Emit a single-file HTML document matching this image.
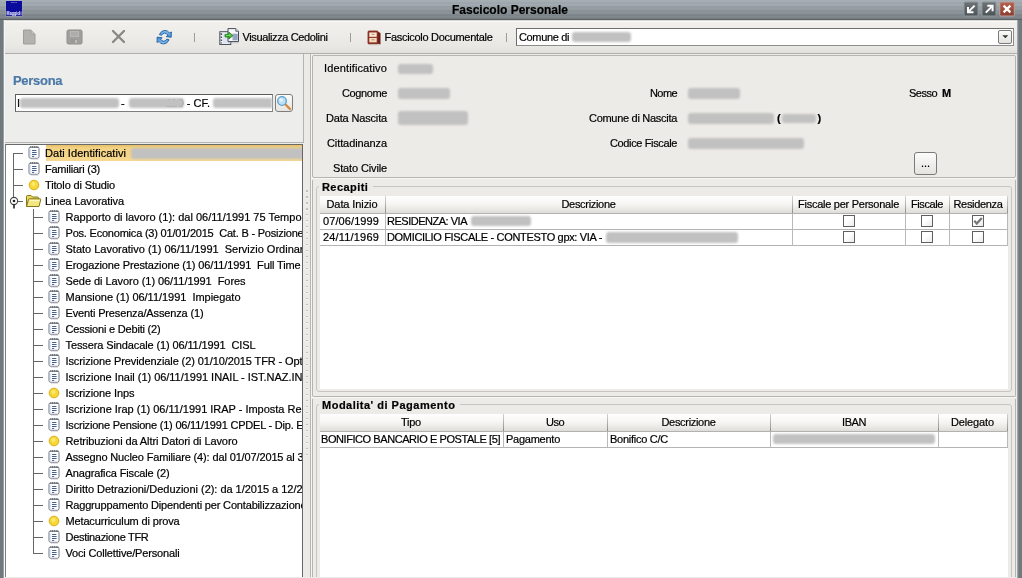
<!DOCTYPE html>
<html>
<head>
<meta charset="utf-8">
<title>Fascicolo Personale</title>
<style>
html,body{margin:0;padding:0;}
body{will-change:transform;width:1022px;height:578px;overflow:hidden;position:relative;background:#ecebe7;font-family:"Liberation Sans",sans-serif;font-size:11px;color:#000;-webkit-text-stroke-width:0.2px;}
.abs{position:absolute;}
.t{position:absolute;white-space:pre;line-height:14px;height:14px;}
.r{text-align:right;}
.b{font-weight:bold;}
.blur{position:absolute;background:#c1c1c1;border-radius:3px;filter:blur(0.8px);}
/* window frame */
#titlebar{left:0;top:0;width:1022px;height:20px;border-bottom:1px solid #5c6367;box-sizing:border-box;background:
 repeating-linear-gradient(to bottom, rgba(255,255,255,0.045) 0, rgba(255,255,255,0.045) 2px, rgba(0,0,0,0.015) 2px, rgba(0,0,0,0.015) 4px),
 linear-gradient(to bottom,#a2abb1 0,#a0a9af 20%,#8d969b 55%,#7c8489 85%,#767e83 100%);}
#title{left:-1px;top:3px;width:1022px;text-align:center;font-weight:bold;font-size:12px;line-height:15px;}
#bl{z-index:5;left:0;top:20px;width:5px;height:558px;background:linear-gradient(to right,#70797e 0,#70797e 3px,#99a0a4 3px,#99a0a4 4px,#f6f5f3 4px,#f6f5f3 5px);}
#br{left:1017px;top:20px;width:5px;height:558px;background:linear-gradient(to right,#b4b9ba 0,#8a9296 1px,#70797e 2px);}
.tb{position:absolute;top:2px;width:14px;height:14px;border-radius:2px;box-sizing:border-box;}
/* toolbar */
#toolbar{left:4px;top:20px;width:1013px;height:33px;background:linear-gradient(to bottom,#d9d8d5 0,#d9d8d5 1px,#f9f8f6 1px,#f9f8f6 2px,#f1f0ec 2px,#ecebe7 18px,#e8e7e3 27px,#e1e0dc 33px);border-bottom:1px solid #b0afab;}
.sep{position:absolute;top:33px;width:1px;height:9px;background:#9d9d99;}
/* panels */
.panel{position:absolute;box-sizing:border-box;}
/* tree */
#tree{left:5px;top:144px;width:298px;height:433px;background:#fff;border-left:1px solid #808080;border-top:1px solid #6a6a6a;border-right:1px solid #666;box-sizing:border-box;overflow:hidden;}
.tl{position:absolute;background:#666;}
.ti{position:absolute;white-space:pre;line-height:16px;height:16px;}
/* tables */
.th{position:absolute;box-sizing:border-box;padding-right:2px;height:18px;line-height:17px;text-align:center;background:linear-gradient(to bottom,#ffffff 0,#f7f6f4 45%,#e9e8e4 80%,#dedcd8 100%);border-bottom:1px solid #b3b2ae;white-space:pre;}
.th:after{content:'';position:absolute;right:0;top:0;width:1px;height:17px;background:linear-gradient(to bottom,#d5d4d0,#8f8e8a);}
.td{position:absolute;box-sizing:border-box;white-space:pre;border-right:1px solid #b9b9b9;border-bottom:1px solid #b4b4b4;padding-left:3px;line-height:19px;overflow:hidden;}
.cb{position:absolute;width:12px;height:12px;box-sizing:border-box;border:1px solid #606060;background:linear-gradient(135deg,#ffffff 40%,#ecebe8);}
</style>
</head>
<body>
<!-- title bar -->
<div id="titlebar" class="abs"></div>
<div id="title" class="abs">Fascicolo Personale</div>
<svg class="abs" style="left:5px;top:0px" width="19" height="18" viewBox="0 0 19 18">
 <rect x="0.500" y="0.300" width="17" height="16.400" fill="#aab4da" opacity="0.550"/>
 <rect x="1" y="1" width="16" height="14.800" fill="#0b0b9c"/>
 <text x="1.600" y="14.600" font-family="Liberation Sans, sans-serif" font-size="5" font-weight="bold" fill="#ffffff" textLength="14.800" lengthAdjust="spacingAndGlyphs">Maggioli</text>
 <text x="6" y="3.200" font-family="Liberation Sans, sans-serif" font-size="2.400" fill="#c5c5f0" textLength="6" lengthAdjust="spacingAndGlyphs">gruppo</text>
</svg>
<div id="bl" class="abs"></div>
<div id="br" class="abs"></div>
<!-- title buttons -->
<svg class="abs" style="left:963px;top:1px" width="54" height="17" viewBox="0 0 54 17">
 <defs>
  <linearGradient id="gb" x1="0" y1="0" x2="0" y2="1"><stop offset="0" stop-color="#6d7478"/><stop offset="1" stop-color="#4c5357"/></linearGradient>
  <linearGradient id="gr" x1="0" y1="0" x2="0" y2="1"><stop offset="0" stop-color="#b66250"/><stop offset="1" stop-color="#8c3a2f"/></linearGradient>
 </defs>
 <rect x="1" y="1" width="14" height="14" rx="1" fill="url(#gb)" stroke="#8f989c" stroke-width="1"/>
 <rect x="19" y="1" width="14" height="14" rx="1" fill="url(#gb)" stroke="#8f989c" stroke-width="1"/>
 <rect x="36.800" y="1" width="14.500" height="14" rx="1" fill="url(#gr)" stroke="#b9a39d" stroke-width="1"/>
 <path d="M11.600 4.600 L5.800 10.400" stroke="#fff" stroke-width="2" fill="none"/>
 <path d="M5 6 V11.300 H10.500" stroke="#fff" stroke-width="2" fill="none"/>
 <path d="M22.800 11.600 L28.800 5.600" stroke="#fff" stroke-width="2" fill="none"/>
 <path d="M24.300 4.800 H29.600 V10.200" stroke="#fff" stroke-width="2" fill="none"/>
 <path d="M40.600 4.600 L47.400 11.400 M47.400 4.600 L40.600 11.400" stroke="#fff" stroke-width="2.200" fill="none"/>
</svg>

<!-- toolbar -->
<div id="toolbar" class="abs"></div>
<!-- new doc icon -->
<svg class="abs" style="left:22px;top:29px" width="16" height="17" viewBox="0 0 16 17">
 <path d="M1.500 1 H9 L13 5 V15 H1.500 Z" fill="#b4b2ae" stroke="#a09e9a" stroke-width="1"/>
 <path d="M9 1 V5 H13" fill="#c6c4c0" stroke="#a09e9a" stroke-width="0.800"/>
</svg>
<!-- save icon -->
<svg class="abs" style="left:66px;top:29px" width="17" height="17" viewBox="0 0 17 17">
 <rect x="1" y="1" width="15" height="14" rx="1.500" fill="#a09f9c" stroke="#8f8e8b"/>
 <rect x="4" y="2" width="9" height="6" fill="#b9b8b5"/>
 <path d="M5 4 H12 M5 6 H12" stroke="#a2a19e" stroke-width="1"/>
 <rect x="5" y="10" width="7" height="5" fill="#9a9996"/>
 <rect x="9" y="11" width="2" height="3" fill="#bdbcb9"/>
</svg>
<!-- delete X -->
<svg class="abs" style="left:110px;top:28px" width="18" height="18" viewBox="0 0 18 18">
 <path d="M3 3 L14 14 M14 3 L3 14" stroke="#888784" stroke-width="2.300" fill="none" stroke-linecap="round"/>
</svg>
<!-- refresh -->
<svg class="abs" style="left:156px;top:29px" width="17" height="17" viewBox="0 0 17 17">
 <defs><linearGradient id="rf" x1="0" y1="0" x2="0" y2="1"><stop offset="0" stop-color="#8cc4f0"/><stop offset="1" stop-color="#3f8ad2"/></linearGradient></defs>
 <g><path d="M3.300 5.600 Q5.300 1.300 9 1.400 Q11.800 1.500 13.300 3.800 L15.400 3 L15.200 8.300 L10.200 7.600 L12 6.300 Q10.500 4.100 8.500 4.100 Q6.600 4.300 5.600 6.300 Z" fill="url(#rf)" stroke="#1f5f9e" stroke-width="0.900" stroke-linejoin="round"/></g>
 <g transform="rotate(180 8.200 8.200)"><path d="M3.300 5.600 Q5.300 1.300 9 1.400 Q11.800 1.500 13.300 3.800 L15.400 3 L15.200 8.300 L10.200 7.600 L12 6.300 Q10.500 4.100 8.500 4.100 Q6.600 4.300 5.600 6.300 Z" fill="url(#rf)" stroke="#1f5f9e" stroke-width="0.900" stroke-linejoin="round"/></g>
</svg>
<div class="sep" style="left:194px"></div>
<!-- cedolini icon -->
<svg class="abs" style="left:218px;top:27px" width="22" height="20" viewBox="0 0 22 20">
 <rect x="1.800" y="4.700" width="11" height="12.800" fill="#eef0f6" stroke="#4d525c" stroke-width="1"/>
 <path d="M3.300 6.300 V16.500" stroke="#4d525c" stroke-width="1.600" stroke-dasharray="1.600 1.500"/>
 <path d="M5 7 H12 V16.500 H5 Z" fill="#dfe4f2"/>
 <path d="M10.500 15.600 H20.800 V16.200 H10.500 Z" fill="#a9adb5" opacity="0.700"/>
 <path d="M10 1.600 H17.800 L20.500 4.300 V14.600 H10 Z" fill="#f6f8fb" stroke="#434a57" stroke-width="1"/>
 <path d="M17.800 1.600 V4.300 H20.500" fill="#dfe5ee" stroke="#434a57" stroke-width="0.800"/>
 <rect x="14.500" y="6.700" width="5.200" height="6.600" fill="#98a4c0"/>
 <path d="M7 7.400 H10.900 V5.200 L14.900 8.600 L10.900 12 V9.900 H7 Z" fill="#3cb62f" stroke="#1c7614" stroke-width="0.800" stroke-linejoin="round"/>
 <path d="M7.800 8.400 H11.500 V7.300 L13.200 8.600" fill="none" stroke="#8fe486" stroke-width="0.800"/>
</svg>
<div class="t" style="left:242.5px;top:30px"><span style="letter-spacing:-0.375px">Visualizza Cedolini</span></div>
<div class="sep" style="left:350px"></div>
<!-- book icon -->
<svg class="abs" style="left:367px;top:30px" width="15" height="16" viewBox="0 0 15 16">
 <path d="M10.500 1.500 L13.500 3 V14.500 L10.500 13.500 Z" fill="#6a1f16"/>
 <rect x="1" y="1" width="10" height="13" rx="1" fill="#93372a" stroke="#7a251a" stroke-width="0.800"/>
 <rect x="2.300" y="2.500" width="7.400" height="4.300" fill="#f7ead6"/>
 <rect x="2.300" y="8" width="7.400" height="4.300" fill="#f3dcc0"/>
 <path d="M4.500 4.300 H7.500 M4.500 9.800 H7.500" stroke="#b98a6a" stroke-width="1"/>
 <path d="M2 14.800 H12.500" stroke="#cfc9c4" stroke-width="1"/>
</svg>
<div class="t" style="left:384.5px;top:30px"><span style="letter-spacing:-0.302px">Fascicolo Documentale</span></div>
<div class="sep" style="left:506px"></div>
<!-- combo -->
<div class="abs" style="left:516px;top:28px;width:498px;height:18px;box-sizing:border-box;background:#fff;border:1px solid #6e6e6e;border-bottom-color:#8c8c8c;border-right-color:#8c8c8c;"></div>
<div class="t" style="left:519px;top:30px"><span style="letter-spacing:-0.356px">Comune di</span></div>
<div class="blur" style="left:572px;top:32px;width:59px;height:10px"></div>
<div class="abs" style="left:998px;top:30px;width:14px;height:14px;box-sizing:border-box;border:1px solid #7b7b78;border-radius:2px;background:linear-gradient(to bottom,#fafaf8,#e3e2de);"></div>
<svg class="abs" style="left:1002px;top:35px" width="7" height="4" viewBox="0 0 7 4"><path d="M0.300 0.300 H6.300 L3.300 3.300 Z" fill="#333"/></svg>

<!-- left persona panel -->
<div class="panel" style="left:4px;top:54px;width:300px;height:89px;background:#ededeb;border-right:1px solid #b4b4b0;border-bottom:1px solid #b5b4b0;"></div>
<div class="t b" style="left:13px;top:73px;font-size:13px;color:#4b79a8;line-height:16px;height:16px;letter-spacing:-0.3px">Persona</div>
<div class="abs" style="left:15px;top:94px;width:258px;height:18px;box-sizing:border-box;background:#fff;border:1px solid #5e5e5e;border-right-color:#8a8a8a;border-bottom-color:#7d7d7d;"></div>
<div class="t" style="left:17px;top:96px"><span style="letter-spacing:0.938px">I</span></div>
<div class="t" style="left:121px;top:96px"><span style="letter-spacing:0.328px">-</span></div>
<div class="t" style="left:166px;top:96px"><span style="letter-spacing:0.021px">110 - CF.</span></div>
<div class="blur" style="left:20px;top:98px;width:99px;height:10px"></div>
<div class="blur" style="left:129px;top:98px;width:55px;height:10px"></div>
<div class="blur" style="left:213px;top:98px;width:59px;height:10px;border-radius:3px 0 0 3px"></div>
<!-- search btn -->
<div class="abs" style="left:275px;top:94px;width:18px;height:18px;box-sizing:border-box;border:1px solid #7d7d79;border-radius:3px;background:linear-gradient(to bottom,#fbfbfa,#e6e5e1);"></div>
<svg class="abs" style="left:276px;top:95px" width="16" height="16" viewBox="0 0 16 16">
 <path d="M8.500 8.500 L14 14" stroke="#d98a3c" stroke-width="2.400" stroke-linecap="round"/>
 <circle cx="6" cy="6" r="4.300" fill="#bfe0f4" stroke="#5aa0d0" stroke-width="1.300"/>
 <circle cx="5" cy="5" r="1.800" fill="#e6f4fc"/>
</svg>

<!-- tree -->
<div id="tree" class="abs">
 <div class="abs" style="left:40px;top:0;width:258px;height:16px;background:linear-gradient(to bottom,#e6c06a 0,#f3d283 3px,#f6d88f 100%);"></div>
</div>
<div class="abs" style="left:6px;top:145px;width:296px;height:432px;overflow:hidden">
<div class="tl" style="left:7px;top:8px;width:1px;height:44px"></div>
<div class="tl" style="left:27px;top:64px;width:1px;height:345px"></div>
<div class="tl" style="left:7px;top:8px;width:10px;height:1px"></div>
<svg class="abs" style="left:21.5px;top:0px" width="12" height="15" viewBox="0 0 12 15"><path d="M1 3.500 Q1 2.200 2.300 2.200 H9.700 Q11 2.200 11 3.500 V11.500 Q11 13.300 9.300 13.300 H2.700 Q1 13.300 1 11.500 Z" fill="#fcfdff" stroke="#6f7480" stroke-width="1"/><path d="M2 12.300 V4" stroke="#b9c9e6" stroke-width="0.900"/><path d="M2.800 1 V3 M4.600 1 V3 M6.400 1 V3 M8.200 1 V3 M9.800 1.300 V3" stroke="#5a5d66" stroke-width="0.900"/><path d="M4 5.500 H8.300 M4 7.500 H8.600 M4 9.500 H8.600 M4 11.400 H6.200" stroke="#4a5f8a" stroke-width="1"/><path d="M3 14.200 H10.300" stroke="#d5d6da" stroke-width="1"/></svg>
<div class="ti" style="left:39px;top:0px"><span style="letter-spacing:0.048px">Dati Identificativi</span></div>
<div class="tl" style="left:7px;top:24px;width:10px;height:1px"></div>
<svg class="abs" style="left:21.5px;top:16px" width="12" height="15" viewBox="0 0 12 15"><path d="M1 3.500 Q1 2.200 2.300 2.200 H9.700 Q11 2.200 11 3.500 V11.500 Q11 13.300 9.300 13.300 H2.700 Q1 13.300 1 11.500 Z" fill="#fcfdff" stroke="#6f7480" stroke-width="1"/><path d="M2 12.300 V4" stroke="#b9c9e6" stroke-width="0.900"/><path d="M2.800 1 V3 M4.600 1 V3 M6.400 1 V3 M8.200 1 V3 M9.800 1.300 V3" stroke="#5a5d66" stroke-width="0.900"/><path d="M4 5.500 H8.300 M4 7.500 H8.600 M4 9.500 H8.600 M4 11.400 H6.200" stroke="#4a5f8a" stroke-width="1"/><path d="M3 14.200 H10.300" stroke="#d5d6da" stroke-width="1"/></svg>
<div class="ti" style="left:39px;top:16px"><span style="letter-spacing:-0.236px">Familiari (3)</span></div>
<div class="tl" style="left:7px;top:40px;width:10px;height:1px"></div>
<svg class="abs" style="left:22px;top:34px" width="12" height="12" viewBox="0 0 12 12"><circle cx="6" cy="6" r="4.800" fill="#f6d838" stroke="#dcae18" stroke-width="1"/><circle cx="5.500" cy="5" r="2" fill="#fbe96e"/></svg>
<div class="ti" style="left:39px;top:32px"><span style="letter-spacing:-0.147px">Titolo di Studio</span></div>
<div class="tl" style="left:12px;top:56px;width:5px;height:1px"></div>
<svg class="abs" style="left:19px;top:49px" width="17" height="14" viewBox="0 0 17 14"><path d="M1.500 12.500 V2.500 Q1.500 1.500 2.500 1.500 H6 L7.500 3 H12.500 Q13.500 3 13.500 4 V5" fill="#ead85c" stroke="#85761c" stroke-width="1"/><path d="M1.500 12.500 L3.500 5.500 Q3.800 4.800 4.500 4.800 H15 Q16 4.800 15.700 5.800 L14 12.500 Z" fill="#f1e680" stroke="#85761c" stroke-width="1"/><path d="M4.500 6.500 H14.500" stroke="#fbf7c8" stroke-width="1.200"/></svg>
<div class="ti" style="left:39px;top:48px"><span style="letter-spacing:-0.108px">Linea Lavorativa</span></div>
<div class="tl" style="left:27px;top:72px;width:10px;height:1px"></div>
<svg class="abs" style="left:41.5px;top:64px" width="12" height="15" viewBox="0 0 12 15"><path d="M1 3.500 Q1 2.200 2.300 2.200 H9.700 Q11 2.200 11 3.500 V11.500 Q11 13.300 9.300 13.300 H2.700 Q1 13.300 1 11.500 Z" fill="#fcfdff" stroke="#6f7480" stroke-width="1"/><path d="M2 12.300 V4" stroke="#b9c9e6" stroke-width="0.900"/><path d="M2.800 1 V3 M4.600 1 V3 M6.400 1 V3 M8.200 1 V3 M9.800 1.300 V3" stroke="#5a5d66" stroke-width="0.900"/><path d="M4 5.500 H8.300 M4 7.500 H8.600 M4 9.500 H8.600 M4 11.400 H6.200" stroke="#4a5f8a" stroke-width="1"/><path d="M3 14.200 H10.300" stroke="#d5d6da" stroke-width="1"/></svg>
<div class="ti" style="left:59.5px;top:64px"><span style="letter-spacing:0.008px">Rapporto di lavoro (1): dal 06/11/1991 75 Tempo</span></div>
<div class="tl" style="left:27px;top:88px;width:10px;height:1px"></div>
<svg class="abs" style="left:41.5px;top:80px" width="12" height="15" viewBox="0 0 12 15"><path d="M1 3.500 Q1 2.200 2.300 2.200 H9.700 Q11 2.200 11 3.500 V11.500 Q11 13.300 9.300 13.300 H2.700 Q1 13.300 1 11.500 Z" fill="#fcfdff" stroke="#6f7480" stroke-width="1"/><path d="M2 12.300 V4" stroke="#b9c9e6" stroke-width="0.900"/><path d="M2.800 1 V3 M4.600 1 V3 M6.400 1 V3 M8.200 1 V3 M9.800 1.300 V3" stroke="#5a5d66" stroke-width="0.900"/><path d="M4 5.500 H8.300 M4 7.500 H8.600 M4 9.500 H8.600 M4 11.400 H6.200" stroke="#4a5f8a" stroke-width="1"/><path d="M3 14.200 H10.300" stroke="#d5d6da" stroke-width="1"/></svg>
<div class="ti" style="left:59.5px;top:80px"><span style="letter-spacing:-0.209px">Pos. Economica (3) 01/01/2015  Cat. B - Posizione</span></div>
<div class="tl" style="left:27px;top:104px;width:10px;height:1px"></div>
<svg class="abs" style="left:41.5px;top:96px" width="12" height="15" viewBox="0 0 12 15"><path d="M1 3.500 Q1 2.200 2.300 2.200 H9.700 Q11 2.200 11 3.500 V11.500 Q11 13.300 9.300 13.300 H2.700 Q1 13.300 1 11.500 Z" fill="#fcfdff" stroke="#6f7480" stroke-width="1"/><path d="M2 12.300 V4" stroke="#b9c9e6" stroke-width="0.900"/><path d="M2.800 1 V3 M4.600 1 V3 M6.400 1 V3 M8.200 1 V3 M9.800 1.300 V3" stroke="#5a5d66" stroke-width="0.900"/><path d="M4 5.500 H8.300 M4 7.500 H8.600 M4 9.500 H8.600 M4 11.400 H6.200" stroke="#4a5f8a" stroke-width="1"/><path d="M3 14.200 H10.300" stroke="#d5d6da" stroke-width="1"/></svg>
<div class="ti" style="left:59.5px;top:96px"><span style="letter-spacing:-0.005px">Stato Lavorativo (1) 06/11/1991  Servizio Ordinar</span></div>
<div class="tl" style="left:27px;top:120px;width:10px;height:1px"></div>
<svg class="abs" style="left:41.5px;top:112px" width="12" height="15" viewBox="0 0 12 15"><path d="M1 3.500 Q1 2.200 2.300 2.200 H9.700 Q11 2.200 11 3.500 V11.500 Q11 13.300 9.300 13.300 H2.700 Q1 13.300 1 11.500 Z" fill="#fcfdff" stroke="#6f7480" stroke-width="1"/><path d="M2 12.300 V4" stroke="#b9c9e6" stroke-width="0.900"/><path d="M2.800 1 V3 M4.600 1 V3 M6.400 1 V3 M8.200 1 V3 M9.800 1.300 V3" stroke="#5a5d66" stroke-width="0.900"/><path d="M4 5.500 H8.300 M4 7.500 H8.600 M4 9.500 H8.600 M4 11.400 H6.200" stroke="#4a5f8a" stroke-width="1"/><path d="M3 14.200 H10.300" stroke="#d5d6da" stroke-width="1"/></svg>
<div class="ti" style="left:59.5px;top:112px"><span style="letter-spacing:-0.132px">Erogazione Prestazione (1) 06/11/1991  Full Time</span></div>
<div class="tl" style="left:27px;top:136px;width:10px;height:1px"></div>
<svg class="abs" style="left:41.5px;top:128px" width="12" height="15" viewBox="0 0 12 15"><path d="M1 3.500 Q1 2.200 2.300 2.200 H9.700 Q11 2.200 11 3.500 V11.500 Q11 13.300 9.300 13.300 H2.700 Q1 13.300 1 11.500 Z" fill="#fcfdff" stroke="#6f7480" stroke-width="1"/><path d="M2 12.300 V4" stroke="#b9c9e6" stroke-width="0.900"/><path d="M2.800 1 V3 M4.600 1 V3 M6.400 1 V3 M8.200 1 V3 M9.800 1.300 V3" stroke="#5a5d66" stroke-width="0.900"/><path d="M4 5.500 H8.300 M4 7.500 H8.600 M4 9.500 H8.600 M4 11.400 H6.200" stroke="#4a5f8a" stroke-width="1"/><path d="M3 14.200 H10.300" stroke="#d5d6da" stroke-width="1"/></svg>
<div class="ti" style="left:59.5px;top:128px"><span style="letter-spacing:-0.056px">Sede di Lavoro (1) 06/11/1991  Fores</span></div>
<div class="tl" style="left:27px;top:152px;width:10px;height:1px"></div>
<svg class="abs" style="left:41.5px;top:144px" width="12" height="15" viewBox="0 0 12 15"><path d="M1 3.500 Q1 2.200 2.300 2.200 H9.700 Q11 2.200 11 3.500 V11.500 Q11 13.300 9.300 13.300 H2.700 Q1 13.300 1 11.500 Z" fill="#fcfdff" stroke="#6f7480" stroke-width="1"/><path d="M2 12.300 V4" stroke="#b9c9e6" stroke-width="0.900"/><path d="M2.800 1 V3 M4.600 1 V3 M6.400 1 V3 M8.200 1 V3 M9.800 1.300 V3" stroke="#5a5d66" stroke-width="0.900"/><path d="M4 5.500 H8.300 M4 7.500 H8.600 M4 9.500 H8.600 M4 11.400 H6.200" stroke="#4a5f8a" stroke-width="1"/><path d="M3 14.200 H10.300" stroke="#d5d6da" stroke-width="1"/></svg>
<div class="ti" style="left:59.5px;top:144px"><span style="letter-spacing:-0.027px">Mansione (1) 06/11/1991  Impiegato</span></div>
<div class="tl" style="left:27px;top:168px;width:10px;height:1px"></div>
<svg class="abs" style="left:41.5px;top:160px" width="12" height="15" viewBox="0 0 12 15"><path d="M1 3.500 Q1 2.200 2.300 2.200 H9.700 Q11 2.200 11 3.500 V11.500 Q11 13.300 9.300 13.300 H2.700 Q1 13.300 1 11.500 Z" fill="#fcfdff" stroke="#6f7480" stroke-width="1"/><path d="M2 12.300 V4" stroke="#b9c9e6" stroke-width="0.900"/><path d="M2.800 1 V3 M4.600 1 V3 M6.400 1 V3 M8.200 1 V3 M9.800 1.300 V3" stroke="#5a5d66" stroke-width="0.900"/><path d="M4 5.500 H8.300 M4 7.500 H8.600 M4 9.500 H8.600 M4 11.400 H6.200" stroke="#4a5f8a" stroke-width="1"/><path d="M3 14.200 H10.300" stroke="#d5d6da" stroke-width="1"/></svg>
<div class="ti" style="left:59.5px;top:160px"><span style="letter-spacing:-0.143px">Eventi Presenza/Assenza (1)</span></div>
<div class="tl" style="left:27px;top:184px;width:10px;height:1px"></div>
<svg class="abs" style="left:41.5px;top:176px" width="12" height="15" viewBox="0 0 12 15"><path d="M1 3.500 Q1 2.200 2.300 2.200 H9.700 Q11 2.200 11 3.500 V11.500 Q11 13.300 9.300 13.300 H2.700 Q1 13.300 1 11.500 Z" fill="#fcfdff" stroke="#6f7480" stroke-width="1"/><path d="M2 12.300 V4" stroke="#b9c9e6" stroke-width="0.900"/><path d="M2.800 1 V3 M4.600 1 V3 M6.400 1 V3 M8.200 1 V3 M9.800 1.300 V3" stroke="#5a5d66" stroke-width="0.900"/><path d="M4 5.500 H8.300 M4 7.500 H8.600 M4 9.500 H8.600 M4 11.400 H6.200" stroke="#4a5f8a" stroke-width="1"/><path d="M3 14.200 H10.300" stroke="#d5d6da" stroke-width="1"/></svg>
<div class="ti" style="left:59.5px;top:176px"><span style="letter-spacing:-0.193px">Cessioni e Debiti (2)</span></div>
<div class="tl" style="left:27px;top:200px;width:10px;height:1px"></div>
<svg class="abs" style="left:41.5px;top:192px" width="12" height="15" viewBox="0 0 12 15"><path d="M1 3.500 Q1 2.200 2.300 2.200 H9.700 Q11 2.200 11 3.500 V11.500 Q11 13.300 9.300 13.300 H2.700 Q1 13.300 1 11.500 Z" fill="#fcfdff" stroke="#6f7480" stroke-width="1"/><path d="M2 12.300 V4" stroke="#b9c9e6" stroke-width="0.900"/><path d="M2.800 1 V3 M4.600 1 V3 M6.400 1 V3 M8.200 1 V3 M9.800 1.300 V3" stroke="#5a5d66" stroke-width="0.900"/><path d="M4 5.500 H8.300 M4 7.500 H8.600 M4 9.500 H8.600 M4 11.400 H6.200" stroke="#4a5f8a" stroke-width="1"/><path d="M3 14.200 H10.300" stroke="#d5d6da" stroke-width="1"/></svg>
<div class="ti" style="left:59.5px;top:192px"><span style="letter-spacing:-0.112px">Tessera Sindacale (1) 06/11/1991  CISL</span></div>
<div class="tl" style="left:27px;top:216px;width:10px;height:1px"></div>
<svg class="abs" style="left:41.5px;top:208px" width="12" height="15" viewBox="0 0 12 15"><path d="M1 3.500 Q1 2.200 2.300 2.200 H9.700 Q11 2.200 11 3.500 V11.500 Q11 13.300 9.300 13.300 H2.700 Q1 13.300 1 11.500 Z" fill="#fcfdff" stroke="#6f7480" stroke-width="1"/><path d="M2 12.300 V4" stroke="#b9c9e6" stroke-width="0.900"/><path d="M2.800 1 V3 M4.600 1 V3 M6.400 1 V3 M8.200 1 V3 M9.800 1.300 V3" stroke="#5a5d66" stroke-width="0.900"/><path d="M4 5.500 H8.300 M4 7.500 H8.600 M4 9.500 H8.600 M4 11.400 H6.200" stroke="#4a5f8a" stroke-width="1"/><path d="M3 14.200 H10.300" stroke="#d5d6da" stroke-width="1"/></svg>
<div class="ti" style="left:59.5px;top:208px"><span style="letter-spacing:-0.100px">Iscrizione Previdenziale (2) 01/10/2015 TFR - Opt</span></div>
<div class="tl" style="left:27px;top:232px;width:10px;height:1px"></div>
<svg class="abs" style="left:41.5px;top:224px" width="12" height="15" viewBox="0 0 12 15"><path d="M1 3.500 Q1 2.200 2.300 2.200 H9.700 Q11 2.200 11 3.500 V11.500 Q11 13.300 9.300 13.300 H2.700 Q1 13.300 1 11.500 Z" fill="#fcfdff" stroke="#6f7480" stroke-width="1"/><path d="M2 12.300 V4" stroke="#b9c9e6" stroke-width="0.900"/><path d="M2.800 1 V3 M4.600 1 V3 M6.400 1 V3 M8.200 1 V3 M9.800 1.300 V3" stroke="#5a5d66" stroke-width="0.900"/><path d="M4 5.500 H8.300 M4 7.500 H8.600 M4 9.500 H8.600 M4 11.400 H6.200" stroke="#4a5f8a" stroke-width="1"/><path d="M3 14.200 H10.300" stroke="#d5d6da" stroke-width="1"/></svg>
<div class="ti" style="left:59.5px;top:224px"><span style="letter-spacing:-0.029px">Iscrizione Inail (1) 06/11/1991 INAIL - IST.NAZ.IN</span></div>
<div class="tl" style="left:27px;top:248px;width:10px;height:1px"></div>
<svg class="abs" style="left:42px;top:242px" width="12" height="12" viewBox="0 0 12 12"><circle cx="6" cy="6" r="4.800" fill="#f6d838" stroke="#dcae18" stroke-width="1"/><circle cx="5.500" cy="5" r="2" fill="#fbe96e"/></svg>
<div class="ti" style="left:59.5px;top:240px"><span style="letter-spacing:-0.087px">Iscrizione Inps</span></div>
<div class="tl" style="left:27px;top:264px;width:10px;height:1px"></div>
<svg class="abs" style="left:41.5px;top:256px" width="12" height="15" viewBox="0 0 12 15"><path d="M1 3.500 Q1 2.200 2.300 2.200 H9.700 Q11 2.200 11 3.500 V11.500 Q11 13.300 9.300 13.300 H2.700 Q1 13.300 1 11.500 Z" fill="#fcfdff" stroke="#6f7480" stroke-width="1"/><path d="M2 12.300 V4" stroke="#b9c9e6" stroke-width="0.900"/><path d="M2.800 1 V3 M4.600 1 V3 M6.400 1 V3 M8.200 1 V3 M9.800 1.300 V3" stroke="#5a5d66" stroke-width="0.900"/><path d="M4 5.500 H8.300 M4 7.500 H8.600 M4 9.500 H8.600 M4 11.400 H6.200" stroke="#4a5f8a" stroke-width="1"/><path d="M3 14.200 H10.300" stroke="#d5d6da" stroke-width="1"/></svg>
<div class="ti" style="left:59.5px;top:256px"><span style="letter-spacing:-0.017px">Iscrizione Irap (1) 06/11/1991 IRAP - Imposta Re</span></div>
<div class="tl" style="left:27px;top:280px;width:10px;height:1px"></div>
<svg class="abs" style="left:41.5px;top:272px" width="12" height="15" viewBox="0 0 12 15"><path d="M1 3.500 Q1 2.200 2.300 2.200 H9.700 Q11 2.200 11 3.500 V11.500 Q11 13.300 9.300 13.300 H2.700 Q1 13.300 1 11.500 Z" fill="#fcfdff" stroke="#6f7480" stroke-width="1"/><path d="M2 12.300 V4" stroke="#b9c9e6" stroke-width="0.900"/><path d="M2.800 1 V3 M4.600 1 V3 M6.400 1 V3 M8.200 1 V3 M9.800 1.300 V3" stroke="#5a5d66" stroke-width="0.900"/><path d="M4 5.500 H8.300 M4 7.500 H8.600 M4 9.500 H8.600 M4 11.400 H6.200" stroke="#4a5f8a" stroke-width="1"/><path d="M3 14.200 H10.300" stroke="#d5d6da" stroke-width="1"/></svg>
<div class="ti" style="left:59.5px;top:272px"><span style="letter-spacing:-0.209px">Iscrizione Pensione (1) 06/11/1991 CPDEL - Dip. E</span></div>
<div class="tl" style="left:27px;top:296px;width:10px;height:1px"></div>
<svg class="abs" style="left:42px;top:290px" width="12" height="12" viewBox="0 0 12 12"><circle cx="6" cy="6" r="4.800" fill="#f6d838" stroke="#dcae18" stroke-width="1"/><circle cx="5.500" cy="5" r="2" fill="#fbe96e"/></svg>
<div class="ti" style="left:59.5px;top:288px"><span style="letter-spacing:-0.092px">Retribuzioni da Altri Datori di Lavoro</span></div>
<div class="tl" style="left:27px;top:312px;width:10px;height:1px"></div>
<svg class="abs" style="left:41.5px;top:304px" width="12" height="15" viewBox="0 0 12 15"><path d="M1 3.500 Q1 2.200 2.300 2.200 H9.700 Q11 2.200 11 3.500 V11.500 Q11 13.300 9.300 13.300 H2.700 Q1 13.300 1 11.500 Z" fill="#fcfdff" stroke="#6f7480" stroke-width="1"/><path d="M2 12.300 V4" stroke="#b9c9e6" stroke-width="0.900"/><path d="M2.800 1 V3 M4.600 1 V3 M6.400 1 V3 M8.200 1 V3 M9.800 1.300 V3" stroke="#5a5d66" stroke-width="0.900"/><path d="M4 5.500 H8.300 M4 7.500 H8.600 M4 9.500 H8.600 M4 11.400 H6.200" stroke="#4a5f8a" stroke-width="1"/><path d="M3 14.200 H10.300" stroke="#d5d6da" stroke-width="1"/></svg>
<div class="ti" style="left:59.5px;top:304px"><span style="letter-spacing:-0.135px">Assegno Nucleo Familiare (4): dal 01/07/2015 al 3</span></div>
<div class="tl" style="left:27px;top:328px;width:10px;height:1px"></div>
<svg class="abs" style="left:41.5px;top:320px" width="12" height="15" viewBox="0 0 12 15"><path d="M1 3.500 Q1 2.200 2.300 2.200 H9.700 Q11 2.200 11 3.500 V11.500 Q11 13.300 9.300 13.300 H2.700 Q1 13.300 1 11.500 Z" fill="#fcfdff" stroke="#6f7480" stroke-width="1"/><path d="M2 12.300 V4" stroke="#b9c9e6" stroke-width="0.900"/><path d="M2.800 1 V3 M4.600 1 V3 M6.400 1 V3 M8.200 1 V3 M9.800 1.300 V3" stroke="#5a5d66" stroke-width="0.900"/><path d="M4 5.500 H8.300 M4 7.500 H8.600 M4 9.500 H8.600 M4 11.400 H6.200" stroke="#4a5f8a" stroke-width="1"/><path d="M3 14.200 H10.300" stroke="#d5d6da" stroke-width="1"/></svg>
<div class="ti" style="left:59.5px;top:320px"><span style="letter-spacing:-0.136px">Anagrafica Fiscale (2)</span></div>
<div class="tl" style="left:27px;top:344px;width:10px;height:1px"></div>
<svg class="abs" style="left:41.5px;top:336px" width="12" height="15" viewBox="0 0 12 15"><path d="M1 3.500 Q1 2.200 2.300 2.200 H9.700 Q11 2.200 11 3.500 V11.500 Q11 13.300 9.300 13.300 H2.700 Q1 13.300 1 11.500 Z" fill="#fcfdff" stroke="#6f7480" stroke-width="1"/><path d="M2 12.300 V4" stroke="#b9c9e6" stroke-width="0.900"/><path d="M2.800 1 V3 M4.600 1 V3 M6.400 1 V3 M8.200 1 V3 M9.800 1.300 V3" stroke="#5a5d66" stroke-width="0.900"/><path d="M4 5.500 H8.300 M4 7.500 H8.600 M4 9.500 H8.600 M4 11.400 H6.200" stroke="#4a5f8a" stroke-width="1"/><path d="M3 14.200 H10.300" stroke="#d5d6da" stroke-width="1"/></svg>
<div class="ti" style="left:59.5px;top:336px"><span style="letter-spacing:-0.029px">Diritto Detrazioni/Deduzioni (2): da 1/2015 a 12/2</span></div>
<div class="tl" style="left:27px;top:360px;width:10px;height:1px"></div>
<svg class="abs" style="left:41.5px;top:352px" width="12" height="15" viewBox="0 0 12 15"><path d="M1 3.500 Q1 2.200 2.300 2.200 H9.700 Q11 2.200 11 3.500 V11.500 Q11 13.300 9.300 13.300 H2.700 Q1 13.300 1 11.500 Z" fill="#fcfdff" stroke="#6f7480" stroke-width="1"/><path d="M2 12.300 V4" stroke="#b9c9e6" stroke-width="0.900"/><path d="M2.800 1 V3 M4.600 1 V3 M6.400 1 V3 M8.200 1 V3 M9.800 1.300 V3" stroke="#5a5d66" stroke-width="0.900"/><path d="M4 5.500 H8.300 M4 7.500 H8.600 M4 9.500 H8.600 M4 11.400 H6.200" stroke="#4a5f8a" stroke-width="1"/><path d="M3 14.200 H10.300" stroke="#d5d6da" stroke-width="1"/></svg>
<div class="ti" style="left:59.5px;top:352px"><span style="letter-spacing:-0.168px">Raggruppamento Dipendenti per Contabilizzazione</span></div>
<div class="tl" style="left:27px;top:376px;width:10px;height:1px"></div>
<svg class="abs" style="left:42px;top:370px" width="12" height="12" viewBox="0 0 12 12"><circle cx="6" cy="6" r="4.800" fill="#f6d838" stroke="#dcae18" stroke-width="1"/><circle cx="5.500" cy="5" r="2" fill="#fbe96e"/></svg>
<div class="ti" style="left:59.5px;top:368px"><span style="letter-spacing:-0.147px">Metacurriculum di prova</span></div>
<div class="tl" style="left:27px;top:392px;width:10px;height:1px"></div>
<svg class="abs" style="left:41.5px;top:384px" width="12" height="15" viewBox="0 0 12 15"><path d="M1 3.500 Q1 2.200 2.300 2.200 H9.700 Q11 2.200 11 3.500 V11.500 Q11 13.300 9.300 13.300 H2.700 Q1 13.300 1 11.500 Z" fill="#fcfdff" stroke="#6f7480" stroke-width="1"/><path d="M2 12.300 V4" stroke="#b9c9e6" stroke-width="0.900"/><path d="M2.800 1 V3 M4.600 1 V3 M6.400 1 V3 M8.200 1 V3 M9.800 1.300 V3" stroke="#5a5d66" stroke-width="0.900"/><path d="M4 5.500 H8.300 M4 7.500 H8.600 M4 9.500 H8.600 M4 11.400 H6.200" stroke="#4a5f8a" stroke-width="1"/><path d="M3 14.200 H10.300" stroke="#d5d6da" stroke-width="1"/></svg>
<div class="ti" style="left:59.5px;top:384px"><span style="letter-spacing:-0.303px">Destinazione TFR</span></div>
<div class="tl" style="left:27px;top:408px;width:10px;height:1px"></div>
<svg class="abs" style="left:41.5px;top:400px" width="12" height="15" viewBox="0 0 12 15"><path d="M1 3.500 Q1 2.200 2.300 2.200 H9.700 Q11 2.200 11 3.500 V11.500 Q11 13.300 9.300 13.300 H2.700 Q1 13.300 1 11.500 Z" fill="#fcfdff" stroke="#6f7480" stroke-width="1"/><path d="M2 12.300 V4" stroke="#b9c9e6" stroke-width="0.900"/><path d="M2.800 1 V3 M4.600 1 V3 M6.400 1 V3 M8.200 1 V3 M9.800 1.300 V3" stroke="#5a5d66" stroke-width="0.900"/><path d="M4 5.500 H8.300 M4 7.500 H8.600 M4 9.500 H8.600 M4 11.400 H6.200" stroke="#4a5f8a" stroke-width="1"/><path d="M3 14.200 H10.300" stroke="#d5d6da" stroke-width="1"/></svg>
<div class="ti" style="left:59.5px;top:400px"><span style="letter-spacing:-0.161px">Voci Collettive/Personali</span></div>
<svg class="abs" style="left:3px;top:51px" width="11" height="13" viewBox="0 0 11 13"><circle cx="5" cy="5" r="3.600" fill="#fff" stroke="#444" stroke-width="1.100"/><circle cx="5" cy="5" r="1.300" fill="#222"/><path d="M5 8.500 V12.500" stroke="#222" stroke-width="1.600"/></svg>
<div class="blur" style="left:125px;top:2.5px;width:175px;height:11px"></div>
</div>

<!-- splitter -->
<div class="abs" style="left:306px;top:190px;width:2px;height:268px;background:repeating-linear-gradient(to bottom,#c2c1bd 0,#c2c1bd 1.5px,#f6f5f2 1.500px,#f6f5f2 2.500px,transparent 2.500px,transparent 6px);"></div>
<div class="abs" style="left:310px;top:54px;width:1px;height:524px;background:#b5b4b0;"></div>
<div class="abs" style="left:311px;top:54px;width:1px;height:524px;background:#f7f6f3;"></div>
<!-- right top panel -->
<div class="panel" style="left:312px;top:55px;width:704px;height:123px;background:#ecebe7;border:1px solid #b5b4b0;border-radius:2px;"></div>
<div class="abs" style="left:312px;top:178px;width:704px;height:1px;background:#f8f7f4;"></div>
<div class="t r" style="left:317px;width:70px;top:61px"><span style="letter-spacing:0.132px">Identificativo</span></div>
<div class="t r" style="left:317px;width:70px;top:86px"><span style="letter-spacing:-0.386px">Cognome</span></div>
<div class="t r" style="left:317px;width:70px;top:111px"><span style="letter-spacing:-0.165px">Data Nascita</span></div>
<div class="t r" style="left:317px;width:70px;top:136px"><span style="letter-spacing:-0.096px">Cittadinanza</span></div>
<div class="t r" style="left:317px;width:70px;top:161px"><span style="letter-spacing:-0.137px">Stato Civile</span></div>
<div class="blur" style="left:398px;top:64px;width:35px;height:10px"></div>
<div class="blur" style="left:398px;top:88px;width:52px;height:11px"></div>
<div class="blur" style="left:398px;top:111px;width:70px;height:14px"></div>
<div class="t r" style="left:577px;width:100px;top:86px"><span style="letter-spacing:-0.586px">Nome</span></div>
<div class="t r" style="left:577px;width:100px;top:111px"><span style="letter-spacing:-0.290px">Comune di Nascita</span></div>
<div class="t r" style="left:577px;width:100px;top:136px"><span style="letter-spacing:-0.367px">Codice Fiscale</span></div>
<div class="blur" style="left:688px;top:88px;width:52px;height:11px"></div>
<div class="blur" style="left:688px;top:113px;width:86px;height:11px"></div>
<div class="t b" style="left:777px;top:111px">(</div>
<div class="blur" style="left:782px;top:114px;width:34px;height:9px"></div>
<div class="t b" style="left:817.5px;top:111px">)</div>
<div class="blur" style="left:688px;top:138px;width:116px;height:11px"></div>
<div class="t" style="left:909px;top:86px"><span style="letter-spacing:-0.516px">Sesso</span></div>
<div class="t b" style="left:942px;top:86px">M</div>
<div class="abs" style="left:914px;top:152px;width:23px;height:23px;box-sizing:border-box;border:1px solid #7a7a76;border-radius:3px;background:linear-gradient(to bottom,#fcfcfb,#e4e3df);"></div>
<div class="t" style="left:914px;width:23px;text-align:center;top:156px"><span style="letter-spacing:-0.057px">...</span></div>

<!-- Recapiti -->
<div class="panel" style="left:312px;top:179px;width:704px;height:218px;border:1px solid #b5b4b0;border-top-color:transparent;border-radius:2px;"></div>
<div class="abs" style="left:312px;top:397px;width:704px;height:1px;background:#f8f7f4;"></div>
<div class="abs" style="left:316px;top:186px;width:696px;height:206px;border:1px solid #c6c5c1;box-sizing:border-box;border-radius:3px;"></div>
<div class="abs" style="left:320px;top:196px;width:688px;height:193px;background:#fff;"></div>
<div class="t b" style="left:319px;top:180px;padding:0 5px 0 3px;background:#ecebe7;letter-spacing:0.43px">Recapiti</div>
<div class="th" style="left:320px;top:196px;width:66px"><span style="letter-spacing:-0.089px">Data Inizio</span></div>
<div class="th" style="left:386px;top:196px;width:407px"><span style="letter-spacing:-0.315px">Descrizione</span></div>
<div class="th" style="left:793px;top:196px;width:113px"><span style="letter-spacing:-0.257px">Fiscale per Personale</span></div>
<div class="th" style="left:906px;top:196px;width:44px"><span style="letter-spacing:-0.406px">Fiscale</span></div>
<div class="th" style="left:950px;top:196px;width:58px"><span style="letter-spacing:-0.332px">Residenza</span></div>
<div class="td" style="left:320px;top:214px;width:66px;height:16px;line-height:15px"><span style="letter-spacing:0.094px">07/06/1999</span></div>
<div class="td" style="left:386px;top:214px;width:407px;height:16px;line-height:15px;padding-left:1px"><span style="letter-spacing:-0.485px">RESIDENZA: VIA</span></div>
<div class="td" style="left:793px;top:214px;width:113px;height:16px"></div>
<div class="td" style="left:906px;top:214px;width:44px;height:16px"></div>
<div class="td" style="left:950px;top:214px;width:58px;height:16px"></div>
<div class="td" style="left:320px;top:230px;width:66px;height:16px;line-height:15px"><span style="letter-spacing:0.175px">24/11/1969</span></div>
<div class="td" style="left:386px;top:230px;width:407px;height:16px;line-height:15px;padding-left:1px"><span style="letter-spacing:-0.328px">DOMICILIO FISCALE - CONTESTO gpx: VIA -</span></div>
<div class="td" style="left:793px;top:230px;width:113px;height:16px"></div>
<div class="td" style="left:906px;top:230px;width:44px;height:16px"></div>
<div class="td" style="left:950px;top:230px;width:58px;height:16px"></div>
<div class="blur" style="left:471px;top:216px;width:60px;height:10px"></div>
<div class="blur" style="left:606px;top:232px;width:132px;height:11px"></div>
<div class="cb" style="left:843px;top:215px"></div>
<div class="cb" style="left:921px;top:215px"></div>
<div class="cb" style="left:972px;top:215px"></div>
<svg class="abs" style="left:973px;top:216px" width="10" height="10" viewBox="0 0 10 10"><path d="M1.300 4.800 L3.800 7.600 L8.800 2" stroke="#787878" stroke-width="2.200" fill="none"/></svg>
<div class="cb" style="left:843px;top:231px"></div>
<div class="cb" style="left:921px;top:231px"></div>
<div class="cb" style="left:972px;top:231px"></div>

<!-- Modalita di pagamento -->
<div class="panel" style="left:312px;top:398px;width:704px;height:190px;border:1px solid #b5b4b0;border-top-color:transparent;border-radius:2px;"></div>
<div class="abs" style="left:316px;top:404px;width:696px;height:190px;border:1px solid #c6c5c1;box-sizing:border-box;border-radius:3px;"></div>
<div class="abs" style="left:320px;top:414px;width:688px;height:164px;background:#fff;"></div>
<div class="t b" style="left:319px;top:398px;padding:0 5px 0 3px;background:#ecebe7;letter-spacing:0.5px">Modalita' di Pagamento</div>
<div class="th" style="left:320px;top:414px;width:184px"><span style="letter-spacing:-0.250px">Tipo</span></div>
<div class="th" style="left:504px;top:414px;width:104px"><span style="letter-spacing:-0.521px">Uso</span></div>
<div class="th" style="left:608px;top:414px;width:163px"><span style="letter-spacing:-0.315px">Descrizione</span></div>
<div class="th" style="left:771px;top:414px;width:168px"><span style="letter-spacing:-0.422px">IBAN</span></div>
<div class="th" style="left:939px;top:414px;width:69px"><span style="letter-spacing:-0.131px">Delegato</span></div>
<div class="td" style="left:320px;top:432px;width:184px;height:16px;line-height:15px;padding-left:1px"><span style="letter-spacing:-0.430px">BONIFICO BANCARIO E POSTALE [5]</span></div>
<div class="td" style="left:504px;top:432px;width:104px;height:16px;line-height:15px;padding-left:2px"><span style="letter-spacing:-0.252px">Pagamento</span></div>
<div class="td" style="left:608px;top:432px;width:163px;height:16px;line-height:15px;padding-left:2px"><span style="letter-spacing:-0.262px">Bonifico C/C</span></div>
<div class="td" style="left:771px;top:432px;width:168px;height:16px"></div>
<div class="td" style="left:939px;top:432px;width:69px;height:16px"></div>
<div class="blur" style="left:773px;top:434px;width:162px;height:10px"></div>
<div class="abs" style="left:4px;top:577px;width:1013px;height:1px;background:#ecebe8;"></div>
</body>
</html>
